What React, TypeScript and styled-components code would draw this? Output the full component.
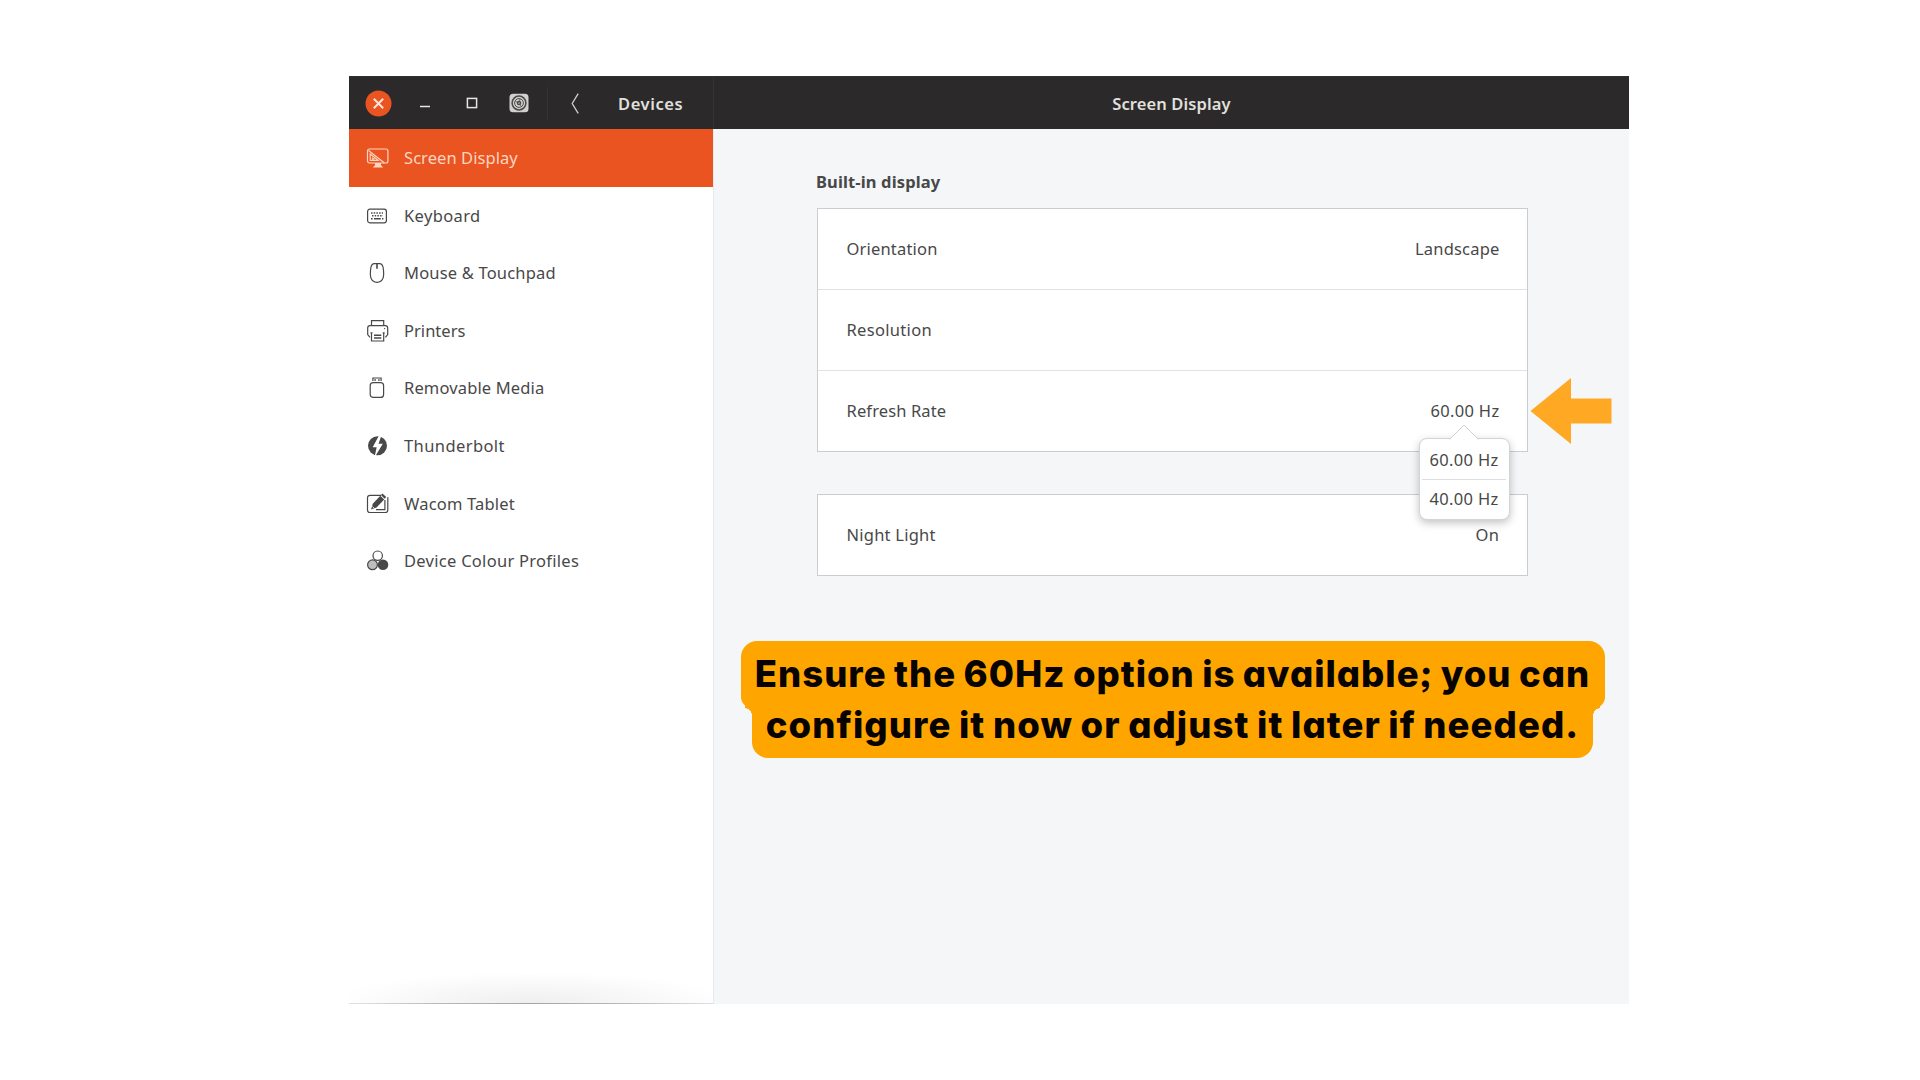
import React from "react";
import styled, { createGlobalStyle } from "styled-components";

const GlobalStyle = createGlobalStyle`
  body { margin: 0; background: #ffffff; }
  * { box-sizing: border-box; }
`;

const Page = styled.main`
  width: 1920px;
  height: 1080px;
  padding: 76px 291px 76px 349px;
  overflow: hidden;
  background: #ffffff;
  color: #484848;
  font-family: "Noto Sans", "Open Sans", sans-serif;
  font-size: 16.5px;
  line-height: 24px;
`;

const Window = styled.div`
  display: flex;
  flex-direction: column;
  width: 1280px;
  height: 928px;
`;

const Label = styled.span<{ $tracking?: number }>`
  white-space: nowrap;
  letter-spacing: ${(p) => p.$tracking ?? 0}px;
`;

/* Title bar */

const TitleBar = styled.header`
  display: flex;
  flex: none;
  height: 53px;
  background: #2b292a;
  color: #e2e0de;
  border-top: 1px solid #313031;
  font-weight: 600;
`;

const TitleBarStart = styled.div`
  display: flex;
  flex: none;
  align-items: center;
  width: 365px;
  padding-left: 5.5px;
  border-right: 1px solid #343233;
`;

const WindowButton = styled.button`
  display: grid;
  place-items: center;
  width: 47px;
  height: 52px;
  padding: 0;
  border: 0;
  background: none;
`;

const Separator = styled.i`
  width: 1px;
  height: 33px;
  margin-left: 4px;
  background: #353334;
`;

const BackButton = styled(WindowButton)`
  width: 55px;
`;

const SectionTitle = styled.div`
  padding: 2px 0 0 15.5px;
`;

const PanelTitle = styled.div`
  display: flex;
  flex: 1;
  align-items: center;
  justify-content: center;
  padding-top: 2px;
`;

/* Sidebar */

const Body = styled.div`
  display: flex;
  flex: 1;
  min-height: 0;
`;

const Sidebar = styled.nav`
  display: flex;
  flex: none;
  flex-direction: column;
  width: 365px;
  background: #ffffff;
  border-right: 1px solid #e6ebee;
`;

const SidebarItem = styled.a<{ $active?: boolean }>`
  display: flex;
  flex: none;
  align-items: center;
  gap: 14px;
  height: 57.55px;
  padding: 1px 0 0 17px;
  background: ${(p) => (p.$active ? "#e95420" : "transparent")};
  color: ${(p) => (p.$active ? "#ffd5c2" : "#484848")};
`;

const Glyph = styled.svg`
  flex: none;
  width: 24px;
  height: 24px;
  fill: none;
  stroke: currentColor;
  stroke-width: 1.2;
`;

const SidebarShade = styled.div`
  height: 33px;
  margin-top: auto;
  border-style: solid;
  border-width: 0 0 1.4px;
  border-image: linear-gradient(90deg, #e4e4e4, #b8b8b8 25%, #a4a4a4 50%, #b8b8b8 75%, #e0e0e0) 1;
  background: radial-gradient(ellipse 55% 31px at 50% 100%, #efefef 0%, #f7f7f7 50%, #ffffff 100%);
`;

/* Settings panel */

const Panel = styled.section`
  display: flex;
  flex: 1;
  flex-direction: column;
  align-items: center;
  min-width: 0;
  padding: 41px 101px 0 103px;
  background: #f4f6f8;
`;

const Heading = styled.h2`
  align-self: flex-start;
  margin: 0 0 14px -1px;
  font-size: 16.5px;
  font-weight: 700;
  line-height: 24px;
`;

const Card = styled.div`
  width: 711px;
  border: 1px solid #c9ccd0;
  background: #ffffff;

  & + & {
    margin-top: 42px;
  }
`;

const SettingRow = styled.div`
  position: relative;
  display: flex;
  align-items: center;
  justify-content: space-between;
  height: 80px;
  padding: 0 27.5px 0 28.5px;

  & + & {
    height: 81px;
    border-top: 1px solid #dfe1e5;
  }
`;

const Value = styled.div`
  position: relative;
  display: flex;
`;

const Popover = styled.div`
  position: absolute;
  z-index: 2;
  top: 39px;
  right: -10px;
  width: 91px;
  height: 82px;
  padding: 2px 2.5px 0;
  border: 1px solid #d3d4d6;
  border-radius: 8px;
  background: #ffffff;
  box-shadow: 0 3px 8px rgba(0, 0, 0, 0.24);
`;

const PopoverTip = styled.svg`
  position: absolute;
  top: -15px;
  left: 29px;
  width: 30px;
  height: 16px;
  fill: #ffffff;
  stroke: #d0d1d3;
`;

const Option = styled.div`
  display: flex;
  align-items: center;
  height: 38px;
  padding-left: 7.5px;

  & + & {
    height: 39px;
    border-top: 1px solid #dcdee0;
  }
`;

const Pointer = styled.svg`
  position: absolute;
  top: 6px;
  left: calc(100% + 3px);
  width: 82px;
  height: 68px;
  fill: #fea824;
`;

/* Callout */

const Callout = styled.p`
  display: flex;
  flex-direction: column;
  align-items: center;
  flex: none;
  width: 864px;
  margin: 65px 0 0;
  color: #060300;
  font-family: Inter, "Open Sans", sans-serif;
  font-size: 36.5px;
  font-weight: 800;
  font-feature-settings: "cv11", "ss03";
  word-spacing: -1.5px;
`;

const CalloutTop = styled.span`
  position: relative;
  z-index: 1;
  width: 864px;
  height: 67px;
  border-radius: 16px 16px 11px 11px;
  background: #ffa500;
  letter-spacing: 0.98px;
  line-height: 67px;
  text-align: center;
  white-space: nowrap;
`;

const CalloutBottom = styled.span`
  position: relative;
  width: 841px;
  height: 66px;
  margin-top: -16px;
  border-radius: 0 0 16px 16px;
  background: #ffa500;
  letter-spacing: 1.07px;
  line-height: 66px;
  text-align: center;
  white-space: nowrap;

  &::before,
  &::after {
    content: "";
    position: absolute;
    top: 14px;
    width: 7px;
    height: 9px;
  }
  &::before {
    right: 100%;
    background: radial-gradient(circle at 0 100%, transparent 6.5px, #ffa500 7px);
  }
  &::after {
    left: 100%;
    background: radial-gradient(circle at 100% 100%, transparent 6.5px, #ffa500 7px);
  }
`;

const icons = {
  screen: (
    <>
      <rect x="1.5" y="3" width="20.4" height="14" rx="2" />
      <path d="M2.5 4.5 18.5 17M4.2 8v6.3h8z M6.5 11.5v1.3h2" />
      <path d="M9 17h6v2.2l2.2 2.3H6.8L9 19.2z" fill="currentColor" stroke="none" />
    </>
  ),
  keyboard: (
    <>
      <rect x="1.6" y="5.2" width="18.8" height="13.6" rx="2.2" />
      <path d="M5 9h12M6 11.8h11" strokeDasharray="1.5 1.2" strokeWidth="1.4" />
      <path d="M5 14.7h1.6M8 14.7h6.8M16 14.7h1.4" strokeWidth="1.4" />
    </>
  ),
  mouse: (
    <>
      <path d="M8 2.6C5.5 2.8 4.9 5 4.6 8.5 4.2 12 3.9 14 4.7 16.4c1 3.2 3.2 4.9 6.3 4.9s5.3-1.7 6.3-4.9c.8-2.4.5-4.4.1-7.9C17.1 5 16.5 2.8 14 2.6z" />
      <path d="M11 2.6v5.2" strokeWidth="1.6" />
    </>
  ),
  printer: (
    <>
      <path d="M5.5 6.5V1.7h12.2v4.8M4.2 17.8h-.6L1.7 15.6V9c0-1.6.8-2.4 2.3-2.4h15.4c1.5 0 2.3.8 2.3 2.4v6.600l-1.900 2.200h-.6" />
      <path d="M5.500 13.800v8.200h12.200v-8.200M4.500 13.800h2M16.700 13.800h2" />
      <path d="M8 16.300h7.300M8 19.100h7.300" strokeWidth="1.5" />
      <circle cx="18.600" cy="9.600" r=".7" fill="currentColor" stroke="none" />
    </>
  ),
  usb: (
    <>
      <path d="M6.900 5V2h8.200v3" />
      <path d="M8.300 4h1.600M12.100 4h1.600" strokeWidth="1.600" />
      <rect x="4.200" y="6.600" width="13.400" height="14.800" rx="3" />
    </>
  ),
  thunderbolt: (
    <>
      <circle cx="11.500" cy="11.800" r="9.500" fill="currentColor" stroke="none" />
      <path d="M13.800 0 6.700 13.300h4L8.400 23.800 16.800 9.800h-4.300L16 0z" fill="#ffffff" stroke="none" />
    </>
  ),
  tablet: (
    <>
      <path d="M15 3.300H4c-1.600 0-2.500.9-2.500 2.500V18c0 1.600.9 2.500 2.500 2.500h15.300c1.600 0 2.500-.9 2.500-2.500V5.300" />
      <path d="M18.900 8v9.700H10" />
      <path d="M5 17.500 6.800 11.800 14.300 3.800l3.900 3.600-7.700 8z" fill="currentColor" stroke="none" />
      <path d="M14.900 3.100 16.500 1.600 20.200 5 18.700 6.700z" fill="currentColor" stroke="none" />
      <path d="m6.300 14.500 2.200 1.900" stroke="#ffffff" strokeWidth=".8" />
    </>
  ),
  profiles: (
    <>
      <circle cx="11.700" cy="6.700" r="4.700" />
      <circle cx="6.500" cy="15.800" r="4.900" fill="#bdbdbd" />
      <circle cx="17" cy="15.800" r="5.300" fill="currentColor" stroke="none" />
    </>
  ),
};

const devices: { name: string; icon: keyof typeof icons; tracking: number }[] = [
  { name: "Screen Display", icon: "screen", tracking: 0.07 },
  { name: "Keyboard", icon: "keyboard", tracking: 0.36 },
  { name: "Mouse & Touchpad", icon: "mouse", tracking: 0.18 },
  { name: "Printers", icon: "printer", tracking: 0.03 },
  { name: "Removable Media", icon: "usb", tracking: 0.14 },
  { name: "Thunderbolt", icon: "thunderbolt", tracking: 0.41 },
  { name: "Wacom Tablet", icon: "tablet", tracking: 0.18 },
  { name: "Device Colour Profiles", icon: "profiles", tracking: 0.28 },
];

export default function App() {
  return (
    <Page>
      <GlobalStyle />
      <Window>
        <TitleBar>
          <TitleBarStart>
            <WindowButton aria-label="Close">
              <svg width="27" height="27" viewBox="0 0 27 27">
                <circle cx="13.500" cy="13.500" r="13" fill="#e95420" />
                <path d="m8.800 8.800 9.400 9.400m0-9.400-9.400 9.400" stroke="#ffe3d6" strokeWidth="2" />
              </svg>
            </WindowButton>
            <WindowButton aria-label="Minimise">
              <svg width="12" height="12" viewBox="0 0 12 12">
                <path d="M1 9.500h10" stroke="#e8e6e4" strokeWidth="1.500" />
              </svg>
            </WindowButton>
            <WindowButton aria-label="Maximise">
              <svg width="12" height="12" viewBox="0 0 12 12">
                <rect x="1.400" y="1.400" width="9.200" height="9.200" fill="none" stroke="#e8e6e4" strokeWidth="1.500" />
              </svg>
            </WindowButton>
            <WindowButton aria-label="Settings">
              <svg width="20" height="20" viewBox="0 0 20 20" fill="none" stroke="#4b4949">
                <rect x=".5" y=".7" width="19" height="18.600" rx="3.500" fill="#d2d0cf" stroke="none" />
                <circle cx="10" cy="10" r="6.900" strokeWidth="1.500" />
                <circle cx="10" cy="10" r="4.400" strokeWidth="1" />
                <circle cx="10" cy="10" r="1.700" strokeWidth="1.200" />
                <path d="M10 10 6.500 8.500M10 10l1-4M10 10l2.200 3.400" strokeWidth=".7" />
              </svg>
            </WindowButton>
            <Separator />
            <BackButton aria-label="Back">
              <svg width="8" height="21" viewBox="0 0 8 21">
                <path d="M7.200.6 1.200 10.500l6 9.900" fill="none" stroke="#d0cecd" strokeWidth="1.300" />
              </svg>
            </BackButton>
            <SectionTitle>
              <Label $tracking={0.58}>Devices</Label>
            </SectionTitle>
          </TitleBarStart>
          <PanelTitle>
            <Label $tracking={0.12}>Screen Display</Label>
          </PanelTitle>
        </TitleBar>

        <Body>
          <Sidebar>
            {devices.map((d) => (
              <SidebarItem key={d.name} $active={d.icon === "screen"}>
                <Glyph viewBox="0 0 24 24">{icons[d.icon]}</Glyph>
                <Label $tracking={d.tracking}>{d.name}</Label>
              </SidebarItem>
            ))}
            <SidebarShade />
          </Sidebar>

          <Panel>
            <Heading>
              <Label $tracking={0.13}>Built-in display</Label>
            </Heading>
            <Card>
              <SettingRow>
                <Label $tracking={0.18}>Orientation</Label>
                <Label $tracking={0.19}>Landscape</Label>
              </SettingRow>
              <SettingRow>
                <Label $tracking={0.32}>Resolution</Label>
              </SettingRow>
              <SettingRow>
                <Label $tracking={0.13}>Refresh Rate</Label>
                <Value>
                  <Label $tracking={0.33}>60.00 Hz</Label>
                  <Popover>
                    <PopoverTip viewBox="0 0 30 16">
                      <path d="M.5 15.500 15 1l14.500 14.500" />
                    </PopoverTip>
                    <Option>
                      <Label $tracking={0.33}>60.00 Hz</Label>
                    </Option>
                    <Option>
                      <Label $tracking={0.33}>40.00 Hz</Label>
                    </Option>
                  </Popover>
                </Value>
                <Pointer viewBox="0 0 82 68">
                  <path d="M.500 34 41 1v20.500h40.500v25H41V67z" />
                </Pointer>
              </SettingRow>
            </Card>
            <Card>
              <SettingRow>
                <Label $tracking={0.24}>Night Light</Label>
                <Label $tracking={0.5}>On</Label>
              </SettingRow>
            </Card>

            <Callout>
              <CalloutTop>Ensure the 60Hz option is available; you can</CalloutTop>
              <CalloutBottom>configure it now or adjust it later if needed.</CalloutBottom>
            </Callout>
          </Panel>
        </Body>
      </Window>
    </Page>
  );
}
